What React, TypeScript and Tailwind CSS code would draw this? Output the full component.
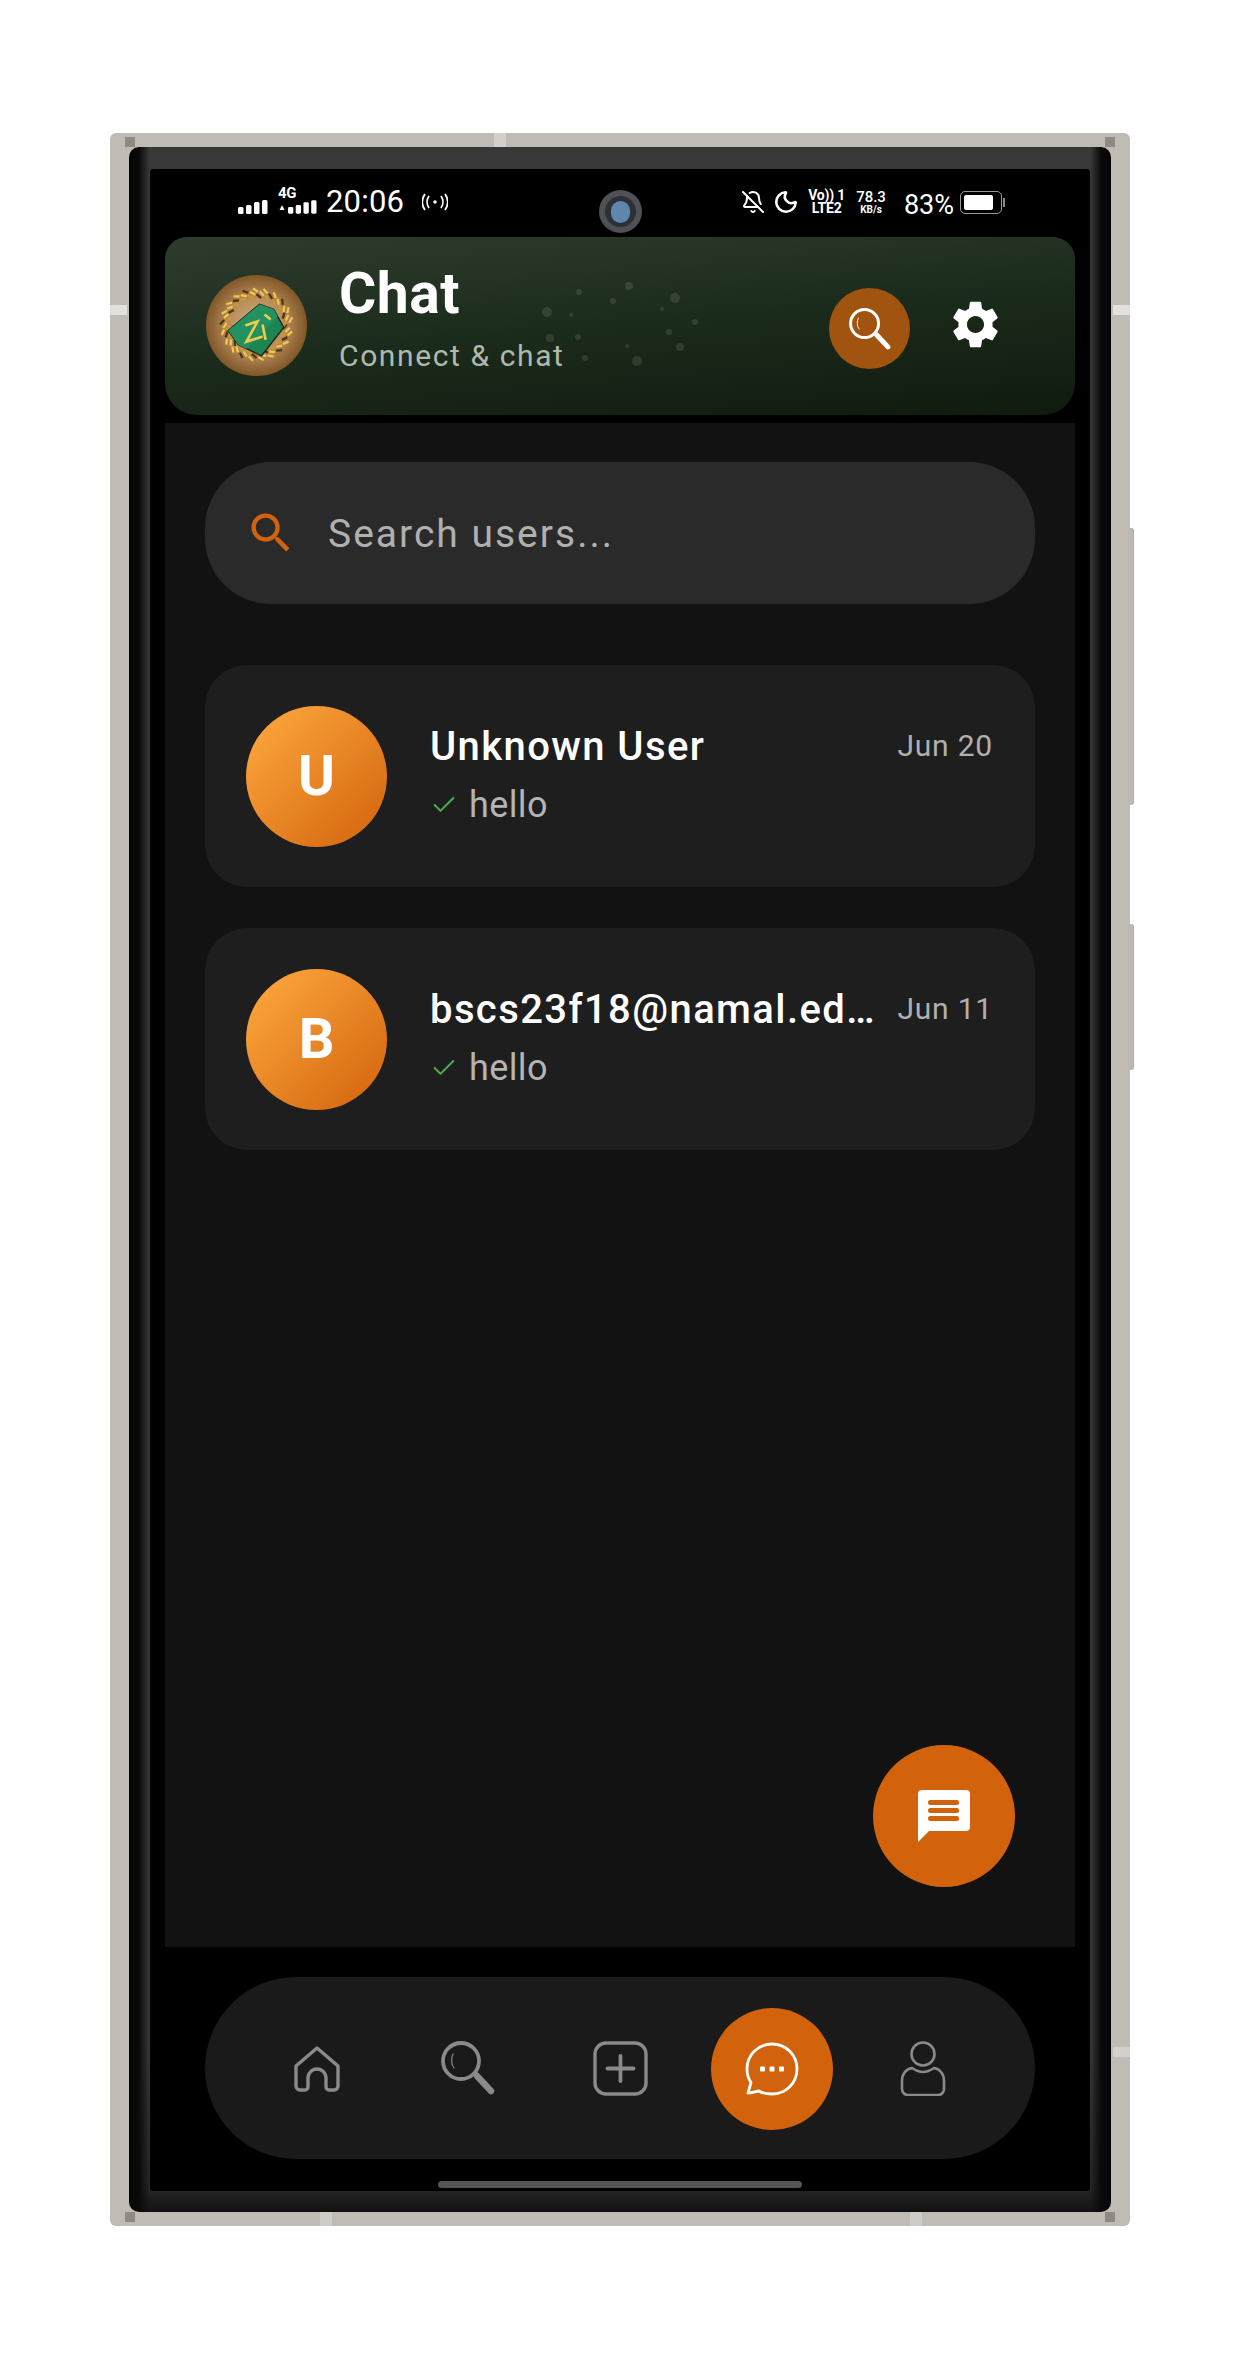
import { BellOff, Moon, Check } from 'lucide-react';
import { MdSearch, MdSettings } from 'react-icons/md';

const chats = [
  { id: 1, letter: 'U', name: 'Unknown User', date: 'Jun 20', last: 'hello' },
  { id: 2, letter: 'B', name: 'bscs23f18@namal.edu.pk', date: 'Jun 11', last: 'hello' },
];

function SignalBars({ className }: { className?: string }) {
  return (
    <svg viewBox="0 0 30 14" className={className} fill="#fff">
      <rect x="0" y="7" width="5.500" height="7" rx="1.500" />
      <rect x="8" y="5" width="5.500" height="9" rx="1.500" />
      <rect x="16" y="2" width="5.500" height="12" rx="1.500" />
      <rect x="24" y="0" width="5.500" height="14" rx="1.500" />
    </svg>
  );
}

function Magnifier({ color, glint }: { color: string; glint: string }) {
  return (
    <svg viewBox="0 0 54 54" className="w-full h-full" fill="none">
      <circle cx="20" cy="20" r="18" stroke={color} strokeWidth="3.800" />
      <path d="M12 13c-2 4-2 10 1 14" stroke={glint} strokeWidth="1.200" strokeLinecap="round" />
      <path d="M33 33l3-2" stroke={color} strokeWidth="3" />
      <path d="M36 35l14 15" stroke={color} strokeWidth="6.500" strokeLinecap="round" />
    </svg>
  );
}

function Logo() {
  const wheat = [];
  for (let i = 0; i < 64; i++) {
    const a = (i / 64) * Math.PI * 2;
    const r = 30 + (i % 3) * 3;
    const x = 50 + Math.cos(a) * r;
    const y = 49 + Math.sin(a) * r;
    const d = a + Math.PI / 2 + 0.7;
    wheat.push(
      <line
        key={i}
        x1={x}
        y1={y}
        x2={x + Math.cos(d) * 6}
        y2={y + Math.sin(d) * 6}
        stroke={i % 4 === 0 ? '#4a3510' : i % 3 === 0 ? '#c99a2e' : '#f2c84e'}
        strokeWidth="2.200"
      />
    );
  }
  return (
    <div className="w-[101px] h-[101px] rounded-full shrink-0 bg-[radial-gradient(circle,#d8b288_0%,#b98d5c_38%,#7f5426_72%,#6b4520_100%)]">
      <svg viewBox="0 0 100 100" className="w-full h-full">
        {wheat}
        <path d="M22 55L53 29L67 34L77 52L55 80L32 69Z" fill="#1c8553" stroke="#20281a" strokeWidth="1.400" />
        <path d="M53 29L67 34L71 41L40 73L32 69L22 55Z" fill="#239160" />
        <path d="M39 50L51 46L40 66L56 61" fill="none" stroke="#f0cb4e" strokeWidth="2.600" />
        <path d="M56 49L59 64M58 39L64 44" fill="none" stroke="#f0cb4e" strokeWidth="2.600" />
      </svg>
    </div>
  );
}

function ChatRow({ letter, name, date, last }: { letter: string; name: string; date: string; last: string }) {
  return (
    <div className="h-[222px] rounded-[42px] bg-[#1e1e1e] pl-[41px] pr-[42px] flex items-center">
      <div className="w-[141px] h-[141px] rounded-full shrink-0 flex items-center justify-center bg-[linear-gradient(135deg,#ffab40,#d2620c)] text-white text-[56px] font-bold">
        {letter}
      </div>
      <div className="ml-[43px] flex-1 min-w-0">
        <div className="flex items-center gap-[12px]">
          <div className="flex-1 min-w-0 truncate text-white text-[40px] leading-[48px] font-medium tracking-[1.400px]">{name}</div>
          <div className="text-[#b0b0b0] text-[30px] leading-[48px] tracking-[0.800px] shrink-0 -mt-[2px]">{date}</div>
        </div>
        <div className="flex items-center mt-[10px]">
          <Check className="w-[28px] h-[28px] text-[#4caf50]" strokeWidth={1.700} />
          <span className="ml-[11px] text-[#b4b4b4] text-[36px] leading-[48px] tracking-[0.400px]">{last}</span>
        </div>
      </div>
    </div>
  );
}

export default function App() {
  return (
    <div className="w-[1245px] h-[2359px] bg-white pt-[133px] pl-[110px] font-[Roboto,sans-serif]">
      {/* phone frame */}
      <div className="relative w-[1020px] h-[2093px] rounded-[6px] bg-[#c0bbb5] pt-[14px] pb-[14px] pl-[19px] pr-[19px]">
        {/* side buttons and antenna notches */}
        <div className="absolute left-[1018px] top-[395px] w-[6px] h-[277px] rounded-r-[3px] bg-[#bdb8b2] border-r border-[#aeaaa4]" />
        <div className="absolute left-[1018px] top-[791px] w-[6px] h-[146px] rounded-r-[3px] bg-[#bdb8b2] border-r border-[#aeaaa4]" />
        <div className="absolute left-[384px] top-0 w-[12px] h-[14px] bg-[#d3d0cb]" />
        <div className="absolute left-0 top-[172px] w-[17px] h-[10px] bg-[#e2e0dc]" />
        <div className="absolute right-0 top-[172px] w-[17px] h-[10px] bg-[#e2e0dc]" />
        <div className="absolute right-0 top-[1914px] w-[17px] h-[10px] bg-[#d3d0cb]" />
        <div className="absolute left-[210px] bottom-0 w-[12px] h-[14px] bg-[#cfcbc6]" />
        <div className="absolute left-[800px] bottom-0 w-[12px] h-[14px] bg-[#cfcbc6]" />
        <div className="absolute left-[15px] top-[4px] w-[10px] h-[10px] bg-[#8f8a83]" />
        <div className="absolute right-[15px] top-[4px] w-[10px] h-[10px] bg-[#8f8a83]" />
        <div className="absolute left-[15px] bottom-[4px] w-[10px] h-[10px] bg-[#8f8a83]" />
        <div className="absolute right-[15px] bottom-[4px] w-[10px] h-[10px] bg-[#8f8a83]" />

        {/* bezel */}
        <div className="relative w-full h-full rounded-[10px] bg-[linear-gradient(90deg,#060606_0%,#0a0a0a_1%,transparent_2.100%,transparent_97.900%,#0a0a0a_99%,#060606_100%),linear-gradient(180deg,#383838_0%,#383838_92%,#252525_99%,#111111_100%)] pt-[22px] pb-[21px] px-[21px]">
          {/* screen */}
          <div className="relative w-full h-full rounded-[3px] bg-black">
            {/* status bar */}
            <div className="relative h-[68px] pl-[88px] pr-[85px] flex items-start justify-between text-white">
              <div className="flex items-center h-[56px] pt-[10px]">
                <SignalBars className="w-[30px] h-[14px] mt-[9px]" />
                <div className="ml-[10px] w-[40px] flex flex-col items-start -mt-[5px]">
                  <span className="text-[15px] leading-[14px] font-bold tracking-[-0.300px]">4G</span>
                  <div className="flex items-end gap-[2px]">
                    <span className="text-[8px] leading-[12px]">▲</span>
                    <SignalBars className="w-[29px] h-[14px]" />
                  </div>
                </div>
                <span className="ml-[8px] text-[31px] leading-[34px] tracking-[0.200px]">20:06</span>
                <svg viewBox="0 0 26 18" className="ml-[18px] w-[26px] h-[18px]" fill="none" stroke="#fff" strokeWidth="1.800">
                  <circle cx="13" cy="9" r="1.800" fill="#fff" stroke="none" />
                  <path d="M7 3c-2.500 3.500-2.500 8.500 0 12M19 3c2.500 3.500 2.500 8.500 0 12M3 1c-3.500 5-3.500 11 0 16M23 1c3.500 5 3.500 11 0 16" />
                </svg>
              </div>
              <div className="flex items-center h-[56px] pt-[10px]">
                <BellOff className="w-[24px] h-[24px]" strokeWidth={2} />
                <Moon className="ml-[8px] w-[26px] h-[26px]" strokeWidth={2.400} />
                <div className="ml-[9px] flex flex-col items-center font-bold text-[14px] leading-[13px] tracking-[-0.200px]">
                  <span>Vo)) 1</span>
                  <span>LTE2</span>
                </div>
                <div className="ml-[11px] flex flex-col items-center">
                  <span className="text-[15px] leading-[14px] font-medium">78.3</span>
                  <span className="text-[10px] leading-[11px] font-bold">KB/s</span>
                </div>
                <span className="ml-[18px] text-[27px] leading-[30px] mt-[5px]">83%</span>
                <div className="ml-[6px] w-[42px] h-[23px] rounded-[5px] border border-[#999] p-[3px]">
                  <div className="w-[29px] h-full rounded-[2px] bg-white" />
                </div>
                <div className="w-[2px] h-[9px] ml-[1px] bg-[#888]" />
              </div>
              {/* camera */}
              <div className="absolute left-[449px] top-[21px] w-[43px] h-[43px] rounded-full bg-[#4e5156] flex items-center justify-center">
                <div className="w-[31px] h-[31px] rounded-full bg-[#2e3036] flex items-center justify-center">
                  <div className="w-[19px] h-[22px] rounded-full bg-[#5f86ad]" />
                </div>
              </div>
            </div>

            {/* header */}
            <div className="relative mx-[15px] h-[178px] rounded-t-[22px] rounded-b-[32px] bg-[linear-gradient(175deg,#2e3c2e_0%,#1b2b1b_50%,#101a10_100%)] pl-[41px] pr-[71px] flex items-center overflow-hidden">
              <svg viewBox="165 237 910 178" className="absolute inset-0 w-full h-full" fill="#fff" fillOpacity="0.1">
                <circle cx="579" cy="292" r="3" />
                <circle cx="629" cy="286" r="4" />
                <circle cx="613" cy="301" r="3" />
                <circle cx="547" cy="312" r="5" />
                <circle cx="571" cy="315" r="2" />
                <circle cx="550" cy="338" r="4" />
                <circle cx="578" cy="337" r="3" />
                <circle cx="627" cy="346" r="2" />
                <circle cx="585" cy="358" r="3" />
                <circle cx="637" cy="361" r="5" />
                <circle cx="675" cy="298" r="5" />
                <circle cx="662" cy="309" r="2" />
                <circle cx="695" cy="322" r="3" />
                <circle cx="669" cy="332" r="3" />
                <circle cx="680" cy="347" r="4" />
              </svg>
              <div className="relative -mt-[1px]">
                <Logo />
              </div>
              <div className="relative ml-[32px] flex-1 -mt-[9px]">
                <div className="text-white text-[57px] leading-[62px] font-bold tracking-[0.500px] -mt-[4px]">Chat</div>
                <div className="mt-[11px] text-[#b0b8b0] text-[30px] leading-[40px] tracking-[1.600px]">Connect &amp; chat</div>
              </div>
              <div className="relative w-[81px] h-[81px] rounded-full bg-[#a0540f] flex items-center justify-center mt-[5px]">
                <div className="w-[42px] h-[42px]">
                  <Magnifier color="#ffffff" glint="#ffffff" />
                </div>
              </div>
              <MdSettings className="relative ml-[37px] w-[57px] h-[57px] text-white -mt-[3px]" />
            </div>

            {/* chat panel */}
            <div className="relative mx-[15px] mt-[8px] h-[1524px] bg-[#121212] px-[40px] pt-[39px]">
              <div className="h-[142px] rounded-[66px] bg-[#2a2a2a] pl-[40px] flex items-center">
                <MdSearch className="w-[52px] h-[52px] text-[#d2620c]" />
                <span className="ml-[31px] text-[#b0b0b0] text-[39px] tracking-[2px] mt-[3px]">Search users...</span>
              </div>
              <div className="mt-[61px] flex flex-col gap-[41px]">
                {chats.map((c) => (
                  <ChatRow key={c.id} letter={c.letter} name={c.name} date={c.date} last={c.last} />
                ))}
              </div>
              {/* fab */}
              <div className="absolute left-[708px] top-[1322px] w-[142px] h-[142px] rounded-full bg-[#d2620c] flex items-center justify-center">
                <svg viewBox="0 0 52 52" className="w-[52px] h-[52px]">
                  <path d="M4 0h44a4 4 0 0 1 4 4v33a4 4 0 0 1-4 4H11L0 52V4a4 4 0 0 1 4-4z" fill="#fff" />
                  <rect x="10" y="10" width="31" height="5" rx="2.500" fill="#d2620c" />
                  <rect x="10" y="18" width="31" height="5" rx="2.500" fill="#d2620c" />
                  <rect x="10" y="26" width="31" height="5" rx="2.500" fill="#d2620c" />
                </svg>
              </div>
            </div>

            {/* bottom nav */}
            <div className="mx-[55px] mt-[30px] h-[182px] rounded-[91px] bg-[#1a1a1a] relative flex items-center">
              <div className="absolute left-[89px] top-[69px] w-[46px] h-[46px]">
                <svg viewBox="0 0 46 46" className="w-full h-full" fill="none" stroke="#8a8a8a" strokeWidth="3.400" strokeLinejoin="round">
                  <path d="M23 2L2 20v20a4 4 0 0 0 4 4h5a3 3 0 0 0 3-3v-9a9 9 0 0 1 18 0v9a3 3 0 0 0 3 3h5a4 4 0 0 0 4-4V20z" />
                </svg>
              </div>
              <div className="absolute left-[236px] top-[64px] w-[54px] h-[54px]">
                <Magnifier color="#8a8a8a" glint="#8a8a8a" />
              </div>
              <div className="absolute left-[388px] top-[64px] w-[55px] h-[55px]">
                <svg viewBox="0 0 55 55" className="w-full h-full" fill="none" stroke="#8a8a8a">
                  <rect x="2" y="2" width="51" height="51" rx="11" strokeWidth="3.400" />
                  <path d="M27.500 15v25M14.500 27.500h26" strokeWidth="3.800" strokeLinecap="round" />
                </svg>
              </div>
              <div className="absolute left-[506px] top-[31px] w-[122px] h-[122px] rounded-full bg-[#d2620c] flex items-center justify-center">
                <svg viewBox="0 0 54 54" className="w-[54px] h-[54px]" fill="none">
                  <path d="M27 2C13 2 2 13 2 27c0 5 1.500 10 4 13.500L3 51c5 0 8-2 11-2 3 2 8 3 13 3 14 0 25-11 25-25S41 2 27 2z" stroke="#fff" strokeWidth="2.800" strokeLinejoin="round" />
                  <rect x="15" y="24.500" width="5" height="5" rx="1" fill="#fff" />
                  <rect x="24.500" y="24.500" width="5" height="5" rx="1" fill="#fff" />
                  <rect x="34" y="24.500" width="5" height="5" rx="1" fill="#fff" />
                </svg>
              </div>
              <div className="absolute left-[695px] top-[64px] w-[46px] h-[55px]">
                <svg viewBox="0 0 46 55" className="w-full h-full" fill="none" stroke="#8a8a8a" strokeWidth="2.600">
                  <circle cx="23" cy="13" r="11.500" />
                  <path d="M12 27c3 2 6 4 11 4s8-2 11-4c6 1 10 6 10 13v8a6 6 0 0 1-6 6H8a6 6 0 0 1-6-6v-8c0-7 4-12 10-13z" />
                </svg>
              </div>
            </div>

            {/* home indicator */}
            <div className="mt-[22px] mx-auto w-[364px] h-[7px] rounded-[4px] bg-[#555555]" />
          </div>
        </div>
      </div>
    </div>
  );
}
